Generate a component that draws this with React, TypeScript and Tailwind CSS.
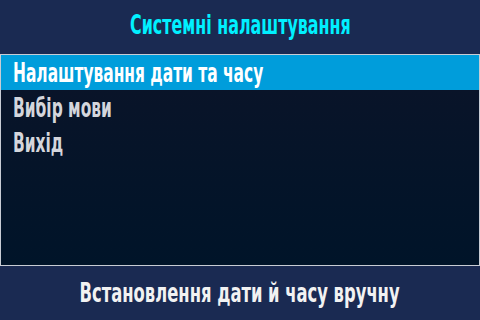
const items = ["Налаштування дати та часу", "Вибір мови", "Вихід"];

export default function App() {
  const font = { fontFamily: '"DejaVu Sans Condensed", "DejaVu Sans", sans-serif' };
  return (
    <div className="w-[480px] h-[320px] flex flex-col bg-[#1a2a52] overflow-hidden" style={font}>
      <div className="h-[54px] flex items-center justify-center pb-[4px]">
        <h1 className="inline-block whitespace-nowrap scale-x-[0.68] origin-center text-[26px] font-bold text-[#00f0ff] leading-none">
          Системні налаштування
        </h1>
      </div>
      <div className="h-[212px] border border-[#c8ccd4] bg-gradient-to-b from-[#0b1429] to-[#001429] flex flex-col">
        {items.map((item, i) => (
          <div
            key={item}
            className={`h-[35px] flex items-center pl-[12px] ${
              i === 0 ? "bg-[#009ddb] text-white" : "text-[#d4d6dc]"
            }`}
          >
            <span className="inline-block whitespace-nowrap scale-x-[0.66] origin-left text-[26px] font-bold leading-none">
              {item}
            </span>
          </div>
        ))}
      </div>
      <div className="flex-1 flex items-center justify-center">
        <p className="inline-block whitespace-nowrap scale-x-[0.70] origin-center text-[26px] font-bold text-[#f2f2f2] leading-none">
          Встановлення дати й часу вручну
        </p>
      </div>
    </div>
  );
}
